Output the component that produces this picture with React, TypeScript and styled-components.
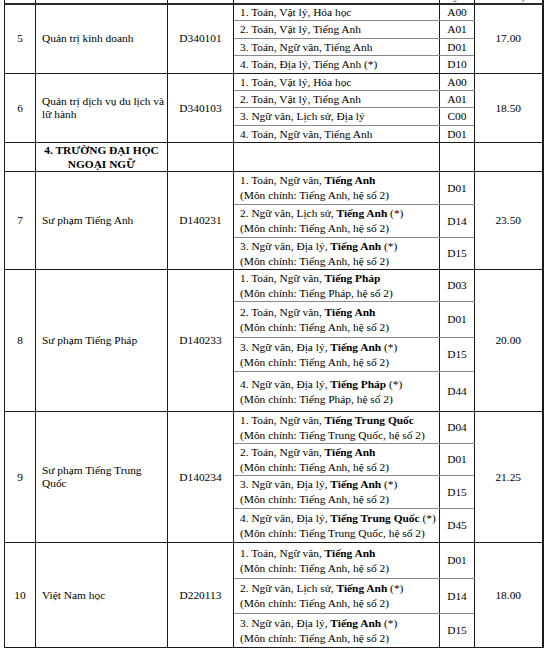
import React from "react";
import styled, { createGlobalStyle } from "styled-components";

const GlobalStyle = createGlobalStyle`
  html, body {
    margin: 0;
    padding: 0;
    background: #fff;
  }
  body {
    font-family: "Liberation Serif", "Times New Roman", serif;
    color: #000;
  }
`;

const Page = styled.div`
  width: 544px;
  height: 653px;
  overflow: hidden;
  padding-left: 4px;
  box-sizing: border-box;
`;

// the scan starts just under the header, so the header row is mostly cropped
const Sheet = styled.table`
  border-collapse: collapse;
  table-layout: fixed;
  width: 538px;
  margin-top: -45px;
  font-family: "Liberation Serif", "Times New Roman", serif;
  font-size: 11.4px;
  color: #000;
  border-right: 2px solid #1a1a1a;
`;

const HeadCell = styled.th<{ $bottom?: boolean }>`
  border: 1px solid #1a1a1a;
  border-bottom: 2px solid #2a2a2a;
  padding: 0 2px;
  font-weight: normal;
  line-height: 13px;
  text-align: center;
  vertical-align: ${(p) => (p.$bottom ? "bottom" : "middle")};
`;

const HeadRow = styled.tr`
  height: 48px;
`;

const Row = styled.tr<{ $h: number }>`
  height: ${(p) => p.$h}px;
`;

const Cell = styled.td<{
  $align?: "left" | "center";
  $minor?: boolean;
  $tight?: boolean;
}>`
  border: 1px solid #1a1a1a;
  border-bottom-color: ${(p) => (p.$minor ? "#8a8a8a" : "#1a1a1a")};
  padding: ${(p) => (p.$align === "left" ? "0 0 0 6px" : "0 2px")};
  text-align: ${(p) => p.$align ?? "center"};
  vertical-align: middle;
  line-height: ${(p) => (p.$tight ? "13px" : "15px")};
  white-space: ${(p) => (p.$tight ? "normal" : "nowrap")};
`;

const SectionTitle = styled.td`
  border: 1px solid #1a1a1a;
  padding: 0 2px;
  text-align: center;
  vertical-align: middle;
  font-weight: bold;
  line-height: 14px;
`;

const Plain = styled.td`
  border: 1px solid #1a1a1a;
  padding: 0;
`;

const B = styled.b`
  font-weight: bold;
`;

type Combo = { line: React.ReactNode; note?: React.ReactNode; code: string; h: number };
type Major = { stt: string; name: string; code: string; score: string; combos: Combo[] };

const note = (lang: string) => `(Môn chính: ${lang}, hệ số 2)`;

const majorsTop: Major[] = [
  {
    stt: "5",
    name: "Quản trị kinh doanh",
    code: "D340101",
    score: "17.00",
    combos: [
      { line: "1. Toán, Vật lý, Hóa học", code: "A00", h: 17 },
      { line: "2. Toán, Vật lý, Tiếng Anh", code: "A01", h: 18 },
      { line: "3. Toán, Ngữ văn, Tiếng Anh", code: "D01", h: 17 },
      { line: "4. Toán, Địa lý, Tiếng Anh (*)", code: "D10", h: 18 },
    ],
  },
  {
    stt: "6",
    name: "Quản trị dịch vụ du lịch và lữ hành",
    code: "D340103",
    score: "18.50",
    combos: [
      { line: "1. Toán, Vật lý, Hóa học", code: "A00", h: 17 },
      { line: "2. Toán, Vật lý, Tiếng Anh", code: "A01", h: 17 },
      { line: "3. Ngữ văn, Lịch sử, Địa lý", code: "C00", h: 18 },
      { line: "4. Toán, Ngữ văn, Tiếng Anh", code: "D01", h: 17 },
    ],
  },
];

const majorsBottom: Major[] = [
  {
    stt: "7",
    name: "Sư phạm Tiếng Anh",
    code: "D140231",
    score: "23.50",
    combos: [
      { line: <>1. Toán, Ngữ văn, <B>Tiếng Anh</B></>, note: note("Tiếng Anh"), code: "D01", h: 33 },
      { line: <>2. Ngữ văn, Lịch sử, <B>Tiếng Anh</B> (*)</>, note: note("Tiếng Anh"), code: "D14", h: 33 },
      { line: <>3. Ngữ văn, Địa lý, <B>Tiếng Anh</B> (*)</>, note: note("Tiếng Anh"), code: "D15", h: 32 },
    ],
  },
  {
    stt: "8",
    name: "Sư phạm Tiếng Pháp",
    code: "D140233",
    score: "20.00",
    combos: [
      { line: <>1. Toán, Ngữ văn, <B>Tiếng Pháp</B></>, note: note("Tiếng Pháp"), code: "D03", h: 32 },
      { line: <>2. Toán, Ngữ văn, <B>Tiếng Anh</B></>, note: note("Tiếng Anh"), code: "D01", h: 36 },
      { line: <>3. Ngữ văn, Địa lý, <B>Tiếng Anh</B> (*)</>, note: note("Tiếng Anh"), code: "D15", h: 34 },
      { line: <>4. Ngữ văn, Địa lý, <B>Tiếng Pháp</B> (*)</>, note: note("Tiếng Pháp"), code: "D44", h: 40 },
    ],
  },
  {
    stt: "9",
    name: "Sư phạm Tiếng Trung Quốc",
    code: "D140234",
    score: "21.25",
    combos: [
      { line: <>1. Toán, Ngữ văn, <B>Tiếng Trung Quốc</B></>, note: note("Tiếng Trung Quốc"), code: "D04", h: 32 },
      { line: <>2. Toán, Ngữ văn, <B>Tiếng Anh</B></>, note: note("Tiếng Anh"), code: "D01", h: 32 },
      { line: <>3. Ngữ văn, Địa lý, <B>Tiếng Anh</B> (*)</>, note: note("Tiếng Anh"), code: "D15", h: 33 },
      { line: <>4. Ngữ văn, Địa lý, <B>Tiếng Trung Quốc</B> (*)</>, note: note("Tiếng Trung Quốc"), code: "D45", h: 34 },
    ],
  },
  {
    stt: "10",
    name: "Việt Nam học",
    code: "D220113",
    score: "18.00",
    combos: [
      { line: <>1. Toán, Ngữ văn, <B>Tiếng Anh</B></>, note: note("Tiếng Anh"), code: "D01", h: 36 },
      { line: <>2. Ngữ văn, Lịch sử, <B>Tiếng Anh</B> (*)</>, note: note("Tiếng Anh"), code: "D14", h: 35 },
      { line: <>3. Ngữ văn, Địa lý, <B>Tiếng Anh</B> (*)</>, note: note("Tiếng Anh"), code: "D15", h: 34 },
    ],
  },
];

const MajorRows = ({ m }: { m: Major }) => {
  const span = m.combos.length;
  return (
    <>
      {m.combos.map((c, i) => {
        const minor = i < span - 1;
        return (
          <Row key={c.code + i} $h={c.h}>
            {i === 0 && (
              <>
                <Cell rowSpan={span}>{m.stt}</Cell>
                <Cell rowSpan={span} $align="left" $tight>
                  {m.name}
                </Cell>
                <Cell rowSpan={span}>{m.code}</Cell>
              </>
            )}
            <Cell $align="left" $minor={minor}>
              {c.line}
              {c.note && (
                <>
                  <br />
                  {c.note}
                </>
              )}
            </Cell>
            <Cell $minor={minor}>{c.code}</Cell>
            {i === 0 && <Cell rowSpan={span}>{m.score}</Cell>}
          </Row>
        );
      })}
    </>
  );
};

export default function App() {
  return (
    <Page>
      <GlobalStyle />
      <Sheet>
        <colgroup>
          <col style={{ width: 31 }} />
          <col style={{ width: 132 }} />
          <col style={{ width: 66 }} />
          <col style={{ width: 206 }} />
          <col style={{ width: 35 }} />
          <col style={{ width: 68 }} />
        </colgroup>
        <thead>
          <HeadRow>
            <HeadCell>TT</HeadCell>
            <HeadCell>Tên ngành</HeadCell>
            <HeadCell>Mã ngành</HeadCell>
            <HeadCell>Tổ hợp môn xét tuyển</HeadCell>
            <HeadCell $bottom>
              Mã
              <br />
              xét
              <br />
              tuyển
            </HeadCell>
            <HeadCell $bottom>
              Điểm chuẩn
              <br />
              (thang 30,
              <br />
              nếu có)
            </HeadCell>
          </HeadRow>
        </thead>
        <tbody>
          {majorsTop.map((m) => (
            <MajorRows key={m.stt} m={m} />
          ))}
          <Row $h={27}>
            <Plain />
            <SectionTitle>
              4. TRƯỜNG ĐẠI HỌC
              <br />
              NGOẠI NGỮ
            </SectionTitle>
            <Plain />
            <Plain />
            <Plain />
            <Plain />
          </Row>
          {majorsBottom.map((m) => (
            <MajorRows key={m.stt} m={m} />
          ))}
        </tbody>
      </Sheet>
    </Page>
  );
}
